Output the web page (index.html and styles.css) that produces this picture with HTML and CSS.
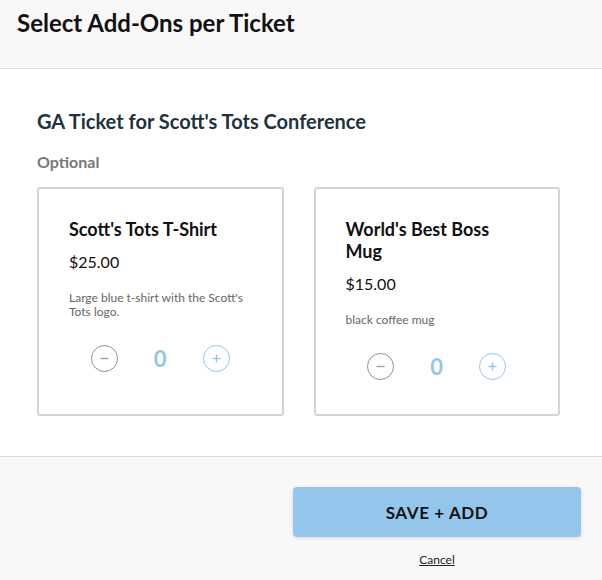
FILE: index.html
```html
<!DOCTYPE html>
<html lang = "en">

<head>

  <meta charset = "UTF-8">

  <title>Select Add-Ons per Ticket</title>

  <link rel="stylesheet" href="styles.css">

</head>

<body>

  <div class = "modal">

    <div class = "modal-header">
      <h1 class = "modal-title">Select Add-Ons per Ticket</h1>
    </div>

    <div class = "modal-body">

      <h2 class = "ticket-name">GA Ticket for Scott's Tots Conference</h2>

      <div class = "section-label">Optional</div>

      <div class = "addon-grid">

        <div class = "addon-card">
          <div class = "addon-title">Scott's Tots T-Shirt</div>
          <div class = "addon-price">$25.00</div>
          <div class = "addon-desc">Large blue t-shirt with the Scott's Tots logo.</div>
          <div class = "counter">
            <button class = "counter-btn minus" aria-label = "remove">
              <svg width = "11" height = "11" viewBox = "0 0 11 11"><line x1 = "1.5" y1 = "5.5" x2 = "9.5" y2 = "5.5"/></svg>
            </button>
            <span class = "counter-value">0</span>
            <button class = "counter-btn plus" aria-label = "add">
              <svg width = "11" height = "11" viewBox = "0 0 11 11"><line x1 = "1.5" y1 = "5.5" x2 = "9.5" y2 = "5.5"/><line x1 = "5.5" y1 = "1.5" x2 = "5.5" y2 = "9.5"/></svg>
            </button>
          </div>
        </div>

        <div class = "addon-card">
          <div class = "addon-title">World's Best Boss Mug</div>
          <div class = "addon-price">$15.00</div>
          <div class = "addon-desc">black coffee mug</div>
          <div class = "counter">
            <button class = "counter-btn minus" aria-label = "remove">
              <svg width = "11" height = "11" viewBox = "0 0 11 11"><line x1 = "1.5" y1 = "5.5" x2 = "9.5" y2 = "5.5"/></svg>
            </button>
            <span class = "counter-value">0</span>
            <button class = "counter-btn plus" aria-label = "add">
              <svg width = "11" height = "11" viewBox = "0 0 11 11"><line x1 = "1.5" y1 = "5.5" x2 = "9.5" y2 = "5.5"/><line x1 = "5.5" y1 = "1.5" x2 = "5.5" y2 = "9.5"/></svg>
            </button>
          </div>
        </div>

      </div>

    </div>

    <div class = "modal-footer">
      <button class = "save-button">SAVE + ADD</button>
      <a class = "cancel-link" href = "#">Cancel</a>
    </div>

  </div>

</body>

</html>
```

FILE: styles.css
```css
body {
  margin: 0;
  font-family: Lato, "Liberation Sans", sans-serif;
  color: #111;
  background: #fff;
}

.modal {
  width: 602px;
  height: 580px;
  display: flex;
  flex-direction: column;
}

/* header */
.modal-header {
  height: 60px;
  padding: 8px 17px 0;
  background: #f8f8f8;
  border-bottom: 1px solid #dcdcdc;
}

.modal-title {
  margin: 0;
  font-size: 24px;
  font-weight: 700;
  color: #111;
}

/* body */
.modal-body {
  padding: 40px 42px 40px 37px;
  border-bottom: 1px solid #dcdcdc;
}

.ticket-name {
  margin: 0;
  font-size: 20px;
  font-weight: 700;
  color: #1e3340;
}

.section-label {
  margin-top: 19px;
  font-size: 16px;
  font-weight: 700;
  color: #777;
}

.addon-grid {
  margin-top: 16px;
  display: grid;
  grid-template-columns: 1fr 1fr;
  align-items: stretch;
  gap: 30px;
}

.addon-card {
  border: 2px solid #d4d4d4;
  border-radius: 3px;
  padding: 29px 30px 34px;
}

.addon-title {
  font-size: 18px;
  font-weight: 700;
  color: #111;
}

.addon-price {
  margin-top: 12px;
  font-size: 16px;
  color: #111;
}

.addon-desc {
  margin-top: 20px;
  font-size: 12px;
  line-height: 14px;
  color: #666;
}

.counter {
  padding-top: 26px;
  display: flex;
  justify-content: center;
  align-items: center;
  gap: 36px;
}

.counter-btn {
  width: 27px;
  height: 27px;
  padding: 0;
  border-radius: 50%;
  background: #fff;
  display: flex;
  align-items: center;
  justify-content: center;
}

.counter-btn svg {
  stroke-width: 1.4;
}

.counter-btn.minus {
  border: 1px solid #8e8e8e;
}

.counter-btn.minus svg {
  stroke: #a0a0a0;
}

.counter-btn.plus {
  border: 1px solid #93c6ec;
}

.counter-btn.plus svg {
  stroke: #93c6ec;
}

.counter-value {
  font-size: 22px;
  font-weight: 700;
  color: #93c6ec;
  line-height: 27px;
}

/* footer */
.modal-footer {
  flex: 1;
  background: #f8f8f8;
  padding: 30px 21px 0 0;
  display: flex;
  flex-direction: column;
  align-items: flex-end;
}

.save-button {
  width: 288px;
  height: 50px;
  border: none;
  border-radius: 4px;
  background: #94c6ec;
  box-shadow: 0 1px 4px rgba(0, 0, 0, 0.12);
  font-family: Lato, "Liberation Sans", sans-serif;
  font-size: 17px;
  font-weight: 700;
  letter-spacing: 0.6px;
  color: #111;
}

.cancel-link {
  width: 288px;
  margin-top: 15px;
  text-align: center;
  font-size: 12px;
  color: #222;
  text-decoration: underline;
}
```
